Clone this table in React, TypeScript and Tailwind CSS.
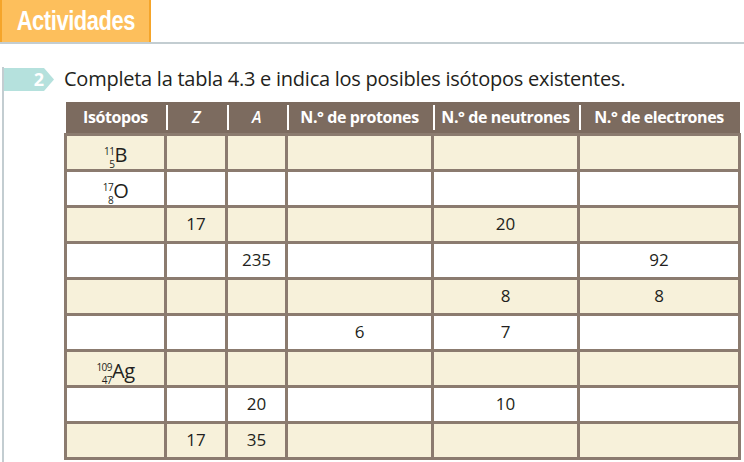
const rows: { iso?: [string, string, string]; z?: string; a?: string; p?: string; n?: string; e?: string }[] = [
  { iso: ['11', '5', 'B'] },
  { iso: ['17', '8', 'O'] },
  { z: '17', n: '20' },
  { a: '235', e: '92' },
  { n: '8', e: '8' },
  { p: '6', n: '7' },
  { iso: ['109', '47', 'Ag'] },
  { a: '20', n: '10' },
  { z: '17', a: '35' },
];

function Isotope({ mass, num, sym }: { mass: string; num: string; sym: string }) {
  return (
    <span className="inline-flex items-start mt-[2px]">
      <span className="flex flex-col items-end gap-[3px] text-[10px] leading-[10px] mr-[1px] tracking-[-0.5px]">
        <span>{mass}</span>
        <span>{num}</span>
      </span>
      <span className="text-[20px] leading-[18px] -ml-[1px] tracking-[-0.5px]">{sym}</span>
    </span>
  );
}

const headers = ['Isótopos', 'Z', 'A', 'N.° de protones', 'N.° de neutrones', 'N.° de electrones'];
const widths = ['w-[100px]', 'w-[61px]', 'w-[60px]', 'w-[146px]', 'w-[146px]', 'w-[161px]'];

export default function App() {
  return (
    <div className="w-[744px] h-[462px] bg-white overflow-hidden text-[#231f20]" style={{ fontFamily: '"Open Sans", "Noto Sans", sans-serif' }}>
      <div className="flex items-end h-[44px] border-b-2 border-[#c3cdd1]">
        <div className="w-[151px] h-[44px] bg-[#fdbf5c] border-x-2 border-t-0 border-[#f5a52a] flex items-center justify-center">
          <span
            className="text-white font-bold text-[28px] leading-none scale-x-[0.78] tracking-[-0.5px] mt-[1px]"
            style={{ fontFamily: '"Liberation Sans", Arial, sans-serif' }}
          >
            Actividades
          </span>
        </div>
      </div>
      <div className="border-l-2 border-[#c3cdd1] ml-[2px] h-[418px]">
        <div className="flex items-center mt-[23px] h-[24px]">
          <div className="relative w-[50px] h-[23px] flex items-center justify-end pr-[10px]">
            <svg className="absolute inset-0" width="50" height="23" viewBox="0 0 50 23">
              <polygon points="0,0 40,0 50,11.5 40,23 0,23" fill="#b5e1dd" />
            </svg>
            <span className="relative text-white font-bold text-[18px] leading-none">2</span>
          </div>
          <p className="ml-[10px] text-[20px] leading-none tracking-[-0.25px]">
            Completa la tabla 4.3 e indica los posibles isótopos existentes.
          </p>
        </div>
        <table className="mt-[11px] ml-[60px] border-collapse table-fixed w-[675px]">
          <thead>
            <tr className="bg-[#7c6b5f] h-[32px]">
              {headers.map((h, i) => (
                <th key={h} className={`${widths[i]} p-0 text-white text-[16px] font-bold relative tracking-[-0.4px]`}>
                  <span className={i === 1 || i === 2 ? 'italic font-semibold' : ''}>{h}</span>
                  {i > 0 && <span className="absolute left-0 top-[3px] bottom-[3px] w-[2px] bg-white" />}
                </th>
              ))}
            </tr>
          </thead>
          <tbody>
            {rows.map((r, i) => (
              <tr key={i} className={`h-[36px] ${i % 2 === 0 ? 'bg-[#f7f1da]' : 'bg-white'}`}>
                <td className="border-[3px] border-[#8b7b6f] text-center p-0 text-[17px]">
                  {r.iso && <Isotope mass={r.iso[0]} num={r.iso[1]} sym={r.iso[2]} />}
                </td>
                {[r.z, r.a, r.p, r.n, r.e].map((v, j) => (
                  <td key={j} className="border-[3px] border-[#8b7b6f] text-center p-0 text-[17px]">
                    {v}
                  </td>
                ))}
              </tr>
            ))}
          </tbody>
        </table>
      </div>
    </div>
  );
}
